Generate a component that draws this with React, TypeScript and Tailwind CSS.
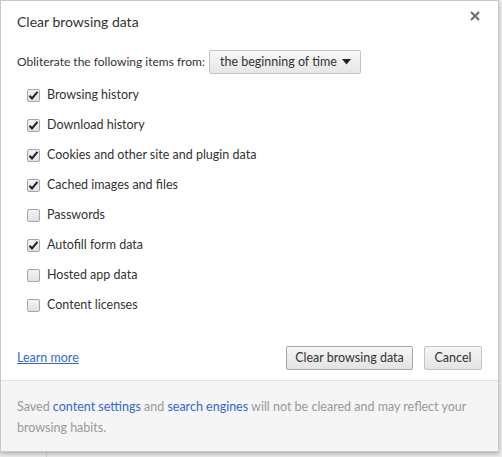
import React, { useState } from 'react';

const items = [
  { label: 'Browsing history', checked: true },
  { label: 'Download history', checked: true },
  { label: 'Cookies and other site and plugin data', checked: true },
  { label: 'Cached images and files', checked: true },
  { label: 'Passwords', checked: false },
  { label: 'Autofill form data', checked: true },
  { label: 'Hosted app data', checked: false },
  { label: 'Content licenses', checked: false },
];

const CheckRow: React.FC<{ label: string; initial: boolean }> = ({ label, initial }) => {
  const [checked, setChecked] = useState(initial);
  return (
    <label className="flex items-center h-[30px] pl-[10px] cursor-default" onClick={() => setChecked(!checked)}>
      <span className="w-[13px] h-[13px] border border-[#a6a6a6] rounded-[2px] bg-gradient-to-b from-[#f2f2f2] to-[#e2e2e2] flex items-center justify-center">
        {checked && (
          <svg width="11" height="11" viewBox="0 0 11 11">
            <path d="M1.5 5.8 L4 8.4 L9.5 1.8" fill="none" stroke="#222" strokeWidth="2" />
          </svg>
        )}
      </span>
      <span className="ml-[7px] text-[12.5px] text-[#333] whitespace-nowrap">{label}</span>
    </label>
  );
};

const App: React.FC = () => {
  return (
    <div className="w-[502px] h-[457px] bg-[#ececec] relative overflow-hidden" style={{ fontFamily: 'Lato, "Noto Sans", sans-serif' }}>
      <div className="absolute left-[46px] top-[452px] bottom-0 border-l border-[#d0d0d0]" />
      <div className="w-[499px] h-[452px] bg-white border border-[#c8c8c8] shadow-[0_2px_4px_rgba(0,0,0,0.25)] flex flex-col relative">
        <button className="absolute right-[18px] top-[10px] text-[#777]">
          <svg width="10" height="10" viewBox="0 0 10 10">
            <path d="M1 1 L9 9 M9 1 L1 9" stroke="#6b6b6b" strokeWidth="2" />
          </svg>
        </button>
        <div className="pl-[16px] pt-[11px] text-[14px] text-[#333] leading-[20px]">Clear browsing data</div>
        <div className="flex items-center pl-[16px] mt-[18px]">
          <span className="text-[12px] text-[#333] whitespace-nowrap">Obliterate the following items from:</span>
          <div className="ml-[4px] h-[24px] w-[152px] border border-[#c4c4c4] rounded-[2px] bg-gradient-to-b from-[#f8f8f8] to-[#e6e6e6] flex items-center justify-between pl-[10px] pr-[9px]">
            <span className="text-[12.5px] text-[#333] whitespace-nowrap">the beginning of time</span>
            <svg width="9" height="6" viewBox="0 0 9 6">
              <path d="M0 0 H9 L4.5 5.5 Z" fill="#222" />
            </svg>
          </div>
        </div>
        <div className="mt-[6px] pl-[16px]">
          {items.map((item) => (
            <CheckRow key={item.label} label={item.label} initial={item.checked} />
          ))}
        </div>
        <div className="flex items-center justify-between pl-[16px] pr-[16px] mt-[26px]">
          <a href="#" className="text-[12.5px] text-[#3367d6] underline">Learn more</a>
          <div className="flex gap-[11px]">
            <button className="h-[24px] w-[127px] border border-[#a8a8a8] rounded-[2px] bg-gradient-to-b from-[#f6f6f6] to-[#e3e3e3] text-[12.5px] text-[#333] whitespace-nowrap">Clear browsing data</button>
            <button className="h-[24px] w-[58px] border border-[#c4c4c4] rounded-[2px] bg-gradient-to-b from-[#f6f6f6] to-[#e3e3e3] text-[12.5px] text-[#333]">Cancel</button>
          </div>
        </div>
        <div className="mt-auto h-[71px] bg-[#f5f5f5] border-t border-[#e0e0e0] pl-[16px] pr-[30px] pt-[15px] text-[12.5px] leading-[21px] text-[#999]">
          Saved <a href="#" className="text-[#3367d6]">content settings</a> and <a href="#" className="text-[#3367d6]">search engines</a> will not be cleared and may reflect your browsing habits.
        </div>
      </div>
    </div>
  );
};

export default App;
